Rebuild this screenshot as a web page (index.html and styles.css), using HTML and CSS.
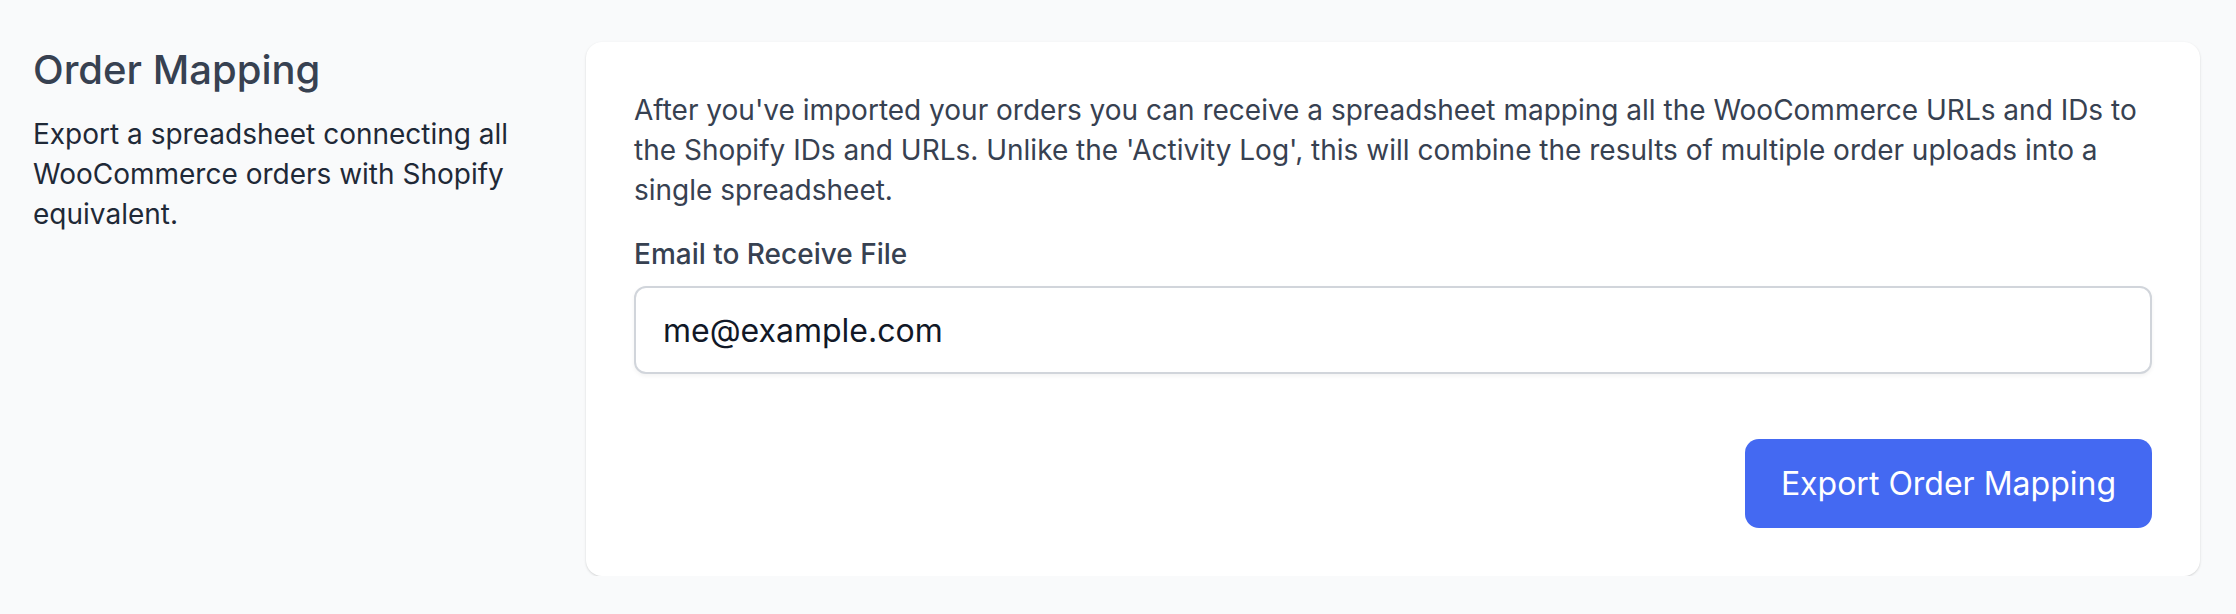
FILE: index.html
```html
<!DOCTYPE html>
<html lang="en">
<head>
  <meta charset="UTF-8">
  <title>Order Mapping</title>
  <link rel="stylesheet" href="styles.css">
</head>
<body>

<div class="section">
  <div class="intro">
    <h2>Order Mapping</h2>
    <p>Export a spreadsheet connecting all WooCommerce orders with Shopify equivalent.</p>
  </div>

  <form class="card">
    <p class="help">After you've imported your orders you can receive a spreadsheet mapping all the WooCommerce URLs and IDs to the Shopify IDs and URLs. Unlike the 'Activity Log', this will combine the results of multiple order uploads into a single spreadsheet.</p>

    <label for="email">Email to Receive File</label>
    <input type="email" id="email" name="email" value="me@example.com">

    <div class="actions">
      <button type="button" class="btn">Export Order Mapping</button>
    </div>
  </form>
</div>

</body>
</html>
```

FILE: styles.css
```css
body {
  margin: 0;
  padding: 42px 36px 0 33px;
  background-color: #f9fafb;
  font-family: Inter, "Liberation Sans", sans-serif;
}
.section {
  display: grid;
  grid-template-columns: 553px 1fr;
}
.intro {
  padding-right: 32px;
}
.intro h2 {
  margin: 0;
  font-size: 40px;
  line-height: 56px;
  font-weight: 500;
  color: #374151;
}
.intro p {
  margin: 16px 0 0;
  font-size: 28px;
  line-height: 40px;
  color: #1f2937;
}
.card {
  display: flex;
  flex-direction: column;
  background: white;
  padding: 48px;
  border-radius: 16px;
  box-shadow: 0 1px 3px rgba(0, 0, 0, 0.1), 0 1px 2px rgba(0, 0, 0, 0.06);
}
.help {
  margin: 0;
  font-size: 28px;
  line-height: 40px;
  color: #374151;
}
label {
  margin-top: 24px;
  font-size: 28px;
  line-height: 40px;
  font-weight: 500;
  color: #374151;
}
input[type="email"] {
  margin-top: 12px;
  height: 88px;
  box-sizing: border-box;
  padding: 0 27px;
  border: 2px solid #d1d5db;
  border-radius: 12px;
  box-shadow: 0 2px 4px rgba(0, 0, 0, 0.05);
  font-family: inherit;
  font-size: 32px;
  color: #111827;
}
.actions {
  display: flex;
  justify-content: flex-end;
  margin-top: 65px;
}
.btn {
  height: 89px;
  padding: 0 36px;
  border: none;
  border-radius: 14px;
  background: #4469f2;
  color: white;
  font-family: inherit;
  font-size: 32px;
  cursor: pointer;
}
```
